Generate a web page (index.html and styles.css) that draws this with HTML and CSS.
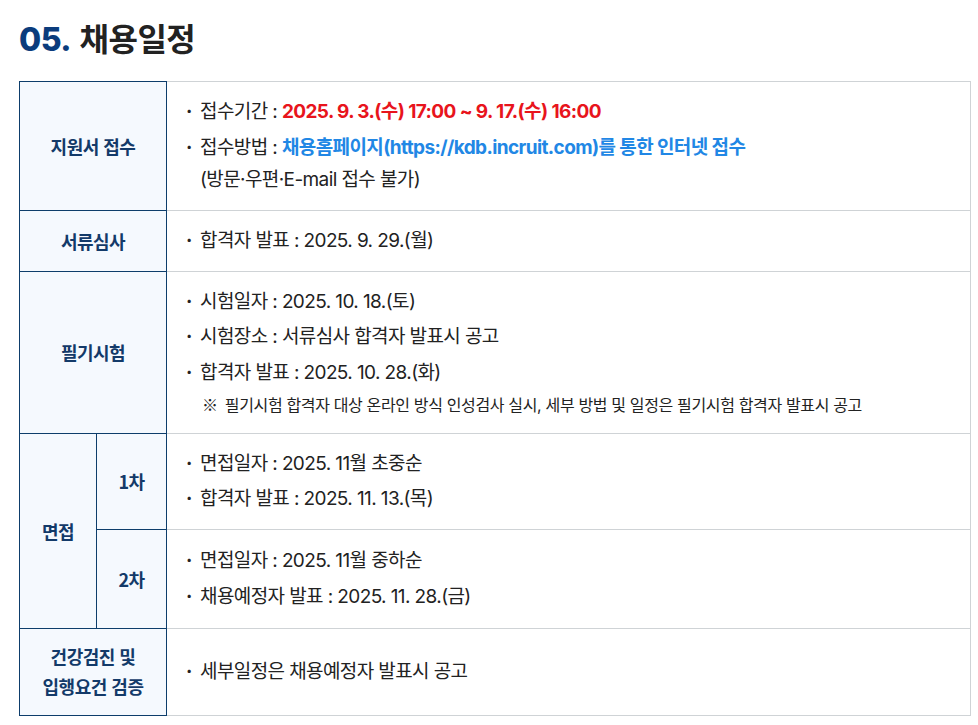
FILE: index.html
```html
<!DOCTYPE html>
<html lang="ko">
<head>
<meta charset="utf-8">
<link rel="stylesheet" href="styles.css">
</head>
<body>
<div class="page">
  <h2 class="title"><span class="num">05.</span> 채용일정</h2>
  <table class="sched">
    <colgroup>
      <col class="c1"><col class="c2"><col>
    </colgroup>
    <tr>
      <th colspan="2">지원서 접수</th>
      <td>
        <ul>
          <li><span class="b">·</span><span>접수기간 : <strong class="red">2025. 9. 3.(수) 17:00 ~ 9. 17.(수) 16:00</strong></span></li>
          <li><span class="b">·</span><span>접수방법 : <strong class="blue">채용홈페이지(https://kdb.incruit.com)를 통한 인터넷 접수</strong><br>(방문·우편·E-mail 접수 불가)</span></li>
        </ul>
      </td>
    </tr>
    <tr>
      <th colspan="2">서류심사</th>
      <td>
        <ul>
          <li><span class="b">·</span><span>합격자 발표 : 2025. 9. 29.(월)</span></li>
        </ul>
      </td>
    </tr>
    <tr>
      <th colspan="2">필기시험</th>
      <td>
        <ul>
          <li><span class="b">·</span><span>시험일자 : 2025. 10. 18.(토)</span></li>
          <li><span class="b">·</span><span>시험장소 : 서류심사 합격자 발표시 공고</span></li>
          <li><span class="b">·</span><span>합격자 발표 : 2025. 10. 28.(화)</span></li>
        </ul>
        <p class="note"><span class="mark">※</span> 필기시험 합격자 대상 온라인 방식 인성검사 실시, 세부 방법 및 일정은 필기시험 합격자 발표시 공고</p>
      </td>
    </tr>
    <tr>
      <th rowspan="2">면접</th>
      <th class="sub">1차</th>
      <td>
        <ul>
          <li><span class="b">·</span><span>면접일자 : 2025. 11월 초중순</span></li>
          <li><span class="b">·</span><span>합격자 발표 : 2025. 11. 13.(목)</span></li>
        </ul>
      </td>
    </tr>
    <tr>
      <th class="sub">2차</th>
      <td class="tall">
        <ul>
          <li><span class="b">·</span><span>면접일자 : 2025. 11월 중하순</span></li>
          <li><span class="b">·</span><span>채용예정자 발표 : 2025. 11. 28.(금)</span></li>
        </ul>
      </td>
    </tr>
    <tr>
      <th colspan="2" class="two">건강검진 및<br>입행요건 검증</th>
      <td>
        <ul>
          <li><span class="b">·</span><span>세부일정은 채용예정자 발표시 공고</span></li>
        </ul>
      </td>
    </tr>
  </table>
</div>
</body>
</html>
```

FILE: styles.css
```css
html, body {
  margin: 0;
  padding: 0;
  background: #ffffff;
}
body {
  font-family: "Inter", "Noto Sans CJK KR", "Noto Sans", sans-serif;
  color: #222222;
}
.page {
  padding: 17px 7px 0 19px;
}
.title {
  margin: 0;
  font-size: 32px;
  line-height: 40px;
  font-weight: 700;
  color: #222222;
  letter-spacing: -0.5px;
  font-family: "Noto Sans CJK KR", sans-serif;
}
.title .num {
  color: #0b3c7c;
  font-family: "Inter", "Noto Sans", sans-serif;
  font-weight: 800;
}
.sched {
  margin-top: 21px;
  width: 952px;
  border-collapse: collapse;
  table-layout: fixed;
}
.c1 { width: 77px; }
.c2 { width: 70px; }
.sched th {
  background: #f5f9fe;
  border: 1px solid #0d3d6b;
  color: #133a69;
  font-family: "Noto Sans CJK KR", sans-serif;
  font-size: 18px;
  font-weight: 700;
  line-height: 30px;
  padding: 14px 0;
  text-align: center;
  vertical-align: middle;
  letter-spacing: -0.5px;
}
.sched th.two {
  padding: 13.5px 0;
  line-height: 29.5px;
}
.sched td {
  border: 1px solid #cfd3d6;
  padding: 14px 10px 14px 19px;
  vertical-align: middle;
  font-size: 19px;
  color: #222222;
  letter-spacing: -0.6px;
}
.sched td.tall {
  padding: 15px 10px 15px 19px;
}
.sched ul {
  list-style: none;
  margin: 0;
  padding: 0;
  display: flex;
  flex-direction: column;
  gap: 3.5px;
}
.sched li {
  display: flex;
  line-height: 32px;
}
.sched li .b {
  flex: 0 0 14px;
  width: 14px;
  font-weight: 700;
}
.red {
  color: #e8141c;
  font-weight: 700;
}
.blue {
  color: #2187e5;
  font-weight: 700;
}
.note {
  margin: 0;
  padding-left: 16px;
  font-size: 16px;
  line-height: 30px;
  height: 30px;
  color: #222222;
  letter-spacing: -0.35px;
}
.note .mark {
  font-family: "Noto Sans CJK KR", sans-serif;
  margin-right: 3px;
}
```
